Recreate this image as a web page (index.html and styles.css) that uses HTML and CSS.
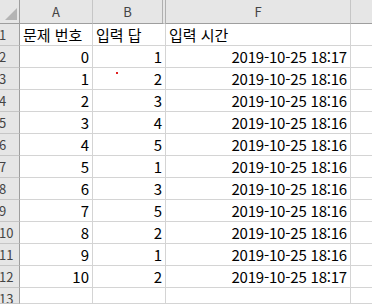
FILE: index.html
```html
<!DOCTYPE html>
<html lang="ko">
<head>
<meta charset="utf-8">
<link rel="stylesheet" href="styles.css">
</head>
<body>
<div class="sheet">
  <div class="hd corner"><svg width="19" height="23" viewBox="0 0 19 23"><polygon points="17,8 17,20 5,20" fill="#b4b4b4"/></svg></div>
  <div class="hd col">A</div>
  <div class="hd col colb">B</div>
  <div class="hd col">F</div>
  <div class="hd col last"></div>

  <div class="rh">1</div><div class="c l">문제 번호</div><div class="c l">입력 답</div><div class="c l">입력 시간</div><div class="c x"></div>
  <div class="rh">2</div><div class="c">0</div><div class="c">1</div><div class="c d">2019-10-25 18:17</div><div class="c x"></div>
  <div class="rh">3</div><div class="c">1</div><div class="c dotcell"><span class="dot"></span>2</div><div class="c d">2019-10-25 18:16</div><div class="c x"></div>
  <div class="rh">4</div><div class="c">2</div><div class="c">3</div><div class="c d">2019-10-25 18:16</div><div class="c x"></div>
  <div class="rh">5</div><div class="c">3</div><div class="c">4</div><div class="c d">2019-10-25 18:16</div><div class="c x"></div>
  <div class="rh">6</div><div class="c">4</div><div class="c">5</div><div class="c d">2019-10-25 18:16</div><div class="c x"></div>
  <div class="rh">7</div><div class="c">5</div><div class="c">1</div><div class="c d">2019-10-25 18:16</div><div class="c x"></div>
  <div class="rh">8</div><div class="c">6</div><div class="c">3</div><div class="c d">2019-10-25 18:16</div><div class="c x"></div>
  <div class="rh">9</div><div class="c">7</div><div class="c">5</div><div class="c d">2019-10-25 18:16</div><div class="c x"></div>
  <div class="rh">10</div><div class="c">8</div><div class="c">2</div><div class="c d">2019-10-25 18:16</div><div class="c x"></div>
  <div class="rh">11</div><div class="c">9</div><div class="c">1</div><div class="c d">2019-10-25 18:16</div><div class="c x"></div>
  <div class="rh">12</div><div class="c">10</div><div class="c">2</div><div class="c d">2019-10-25 18:17</div><div class="c x"></div>
  <div class="rh">13</div><div class="c"></div><div class="c"></div><div class="c"></div><div class="c x"></div>
</div>
</body>
</html>
```
FILE: styles.css
```css
html, body {
  margin: 0;
  padding: 0;
  background: #ffffff;
  overflow: hidden;
}
.sheet {
  display: grid;
  grid-template-columns: 20px 73px 73px 185px 21px;
  grid-template-rows: 24px repeat(12, 22px) 16px;
  width: 372px;
  height: 304px;
  overflow: hidden;
  font-family: "Noto Sans CJK KR", "Noto Sans", sans-serif;
  color: #000;
}
.hd {
  background: #e6e6e6;
  border-bottom: 1px solid #9e9e9e;
  border-right: 1px solid #c6c6c6;
  box-sizing: border-box;
}
.corner {
  border-right: 1px solid #9e9e9e;
  display: flex;
}
.col {
  font-size: 13px;
  line-height: 23px;
  text-align: center;
  color: #444;
}
.colb {
  border-right: 4px double #b0b0b0;
}
.last {
  border-right: none;
}
.rh {
  background: #e6e6e6;
  border-right: 1px solid #9e9e9e;
  border-bottom: 1px solid #c6c6c6;
  box-sizing: border-box;
  font-size: 13px;
  line-height: 20px;
  padding-top: 1px;
  color: #444;
  text-indent: -1px;
  white-space: nowrap;
  overflow: hidden;
}
.c {
  border-right: 1px solid #d4d4d4;
  border-bottom: 1px solid #d4d4d4;
  box-sizing: border-box;
  font-size: 15px;
  line-height: 21px;
  text-align: right;
  padding: 0 3px 0 3px;
  white-space: nowrap;
  overflow: hidden;
}
.c.d {
  letter-spacing: -0.2px;
}
.c.l {
  text-align: left;
  padding-left: 3px;
  overflow: visible;
}
.c.x {
  border-right: none;
}
.dotcell {
  position: relative;
}
.dot {
  position: absolute;
  left: 23px;
  top: 4px;
  width: 2px;
  height: 2px;
  background: #e02020;
}
```
